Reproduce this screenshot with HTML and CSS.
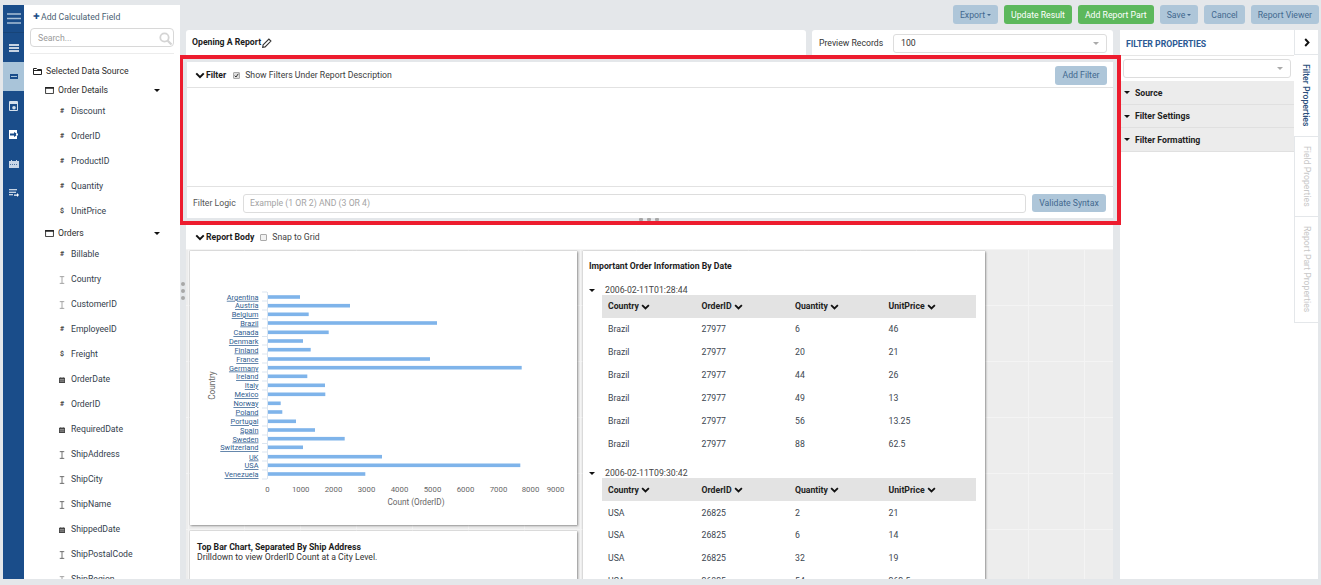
FILE: index.html
```html
<!DOCTYPE html>
<html lang="en">
<head>
<meta charset="utf-8">
<title>Report Designer</title>
<link rel="stylesheet" href="styles.css">
</head>
<body>
<svg class="defs" width="0" height="0">
  <defs>
    <symbol id="chev" viewBox="0 0 12 8"><path d="M1.5 1.5 6 6l4.5-4.5" fill="none" stroke="currentColor" stroke-width="2.4"/></symbol>
    <symbol id="ibeam" viewBox="0 0 8 10"><path d="M1 .5h6M1 9.500h6M4 .5v9" fill="none" stroke="currentColor" stroke-width="1"/></symbol>
    <symbol id="cal" viewBox="0 0 8 8"><path d="M0 1h8v7H0zM2 0h1v2H2zM5 0h1v2H5z" fill="currentColor"/><path d="M1 3.500h6M1 5.500h6" stroke="#fff" stroke-width=".6"/></symbol>
    <symbol id="win" viewBox="0 0 10 8"><path d="M.5.5h9v7h-9z" fill="none" stroke="currentColor"/><path d="M0 0h10v2H0z" fill="currentColor"/></symbol>
  </defs>
</svg>
<div class="app">
  <nav class="rail">
    <div class="rail-top"><svg width="14" height="11" viewBox="0 0 14 11"><path d="M0 1h14M0 5.500h14M0 10h14" stroke="#a9c0d6" stroke-width="1.600"/></svg></div>
    <div class="rail-item"><svg width="10" height="8" viewBox="0 0 10 8"><path d="M0 1h10M0 4h10M0 7h10" stroke="#fff" stroke-width="1.700"/></svg></div>
    <div class="rail-item rail-active"><svg width="8" height="5" viewBox="0 0 8 5"><path d="M0 0h8v5H0z" fill="#1a4d8a"/><path d="M1 2h6v1H1z" fill="#a9c4d9"/></svg></div>
    <div class="rail-item"><svg width="9" height="10" viewBox="0 0 9 10"><path d="M.5.500h8v9h-8z" fill="none" stroke="#d5e1ec"/><path d="M1 1h7v2H1z" fill="#d5e1ec"/><circle cx="5" cy="6.800" r="1.800" fill="#d5e1ec"/></svg></div>
    <div class="rail-item"><svg width="10" height="9" viewBox="0 0 10 9"><path d="M0 0h8v9H0z" fill="#fff"/><path d="M1 3.500h4V2l4 2.500L5 7V5.500H1z" fill="#1a4d8a"/><path d="M7 3.500h2v2H7z" fill="#fff"/></svg></div>
    <div class="rail-item"><svg width="10" height="8" viewBox="0 0 10 8"><path d="M0 1h10v7H0zM2 0h1v2H2zM7 0h1v2H7z" fill="#c9d6e6"/><path d="M1 4.500h8" stroke="#1a4d8a" stroke-width=".7" stroke-dasharray="1 1"/></svg></div>
    <div class="rail-item"><svg width="10" height="8" viewBox="0 0 10 8"><path d="M0 .7h8M0 3.200h7M0 5.700h4" stroke="#fff" stroke-width="1.100"/><path d="M5 5.500h3V4l2 2-2 2V6.800H5z" fill="#fff"/></svg></div>
  </nav>

  <aside class="fields">
    <div class="add-calc"><span class="plus">✚</span>Add Calculated Field</div>
    <div class="search"><span>Search...</span><svg width="13" height="13" viewBox="0 0 13 13"><circle cx="5.500" cy="5.500" r="4.200" fill="none" stroke="#d4d4d4" stroke-width="1.800"/><path d="m8.500 8.500 4 4" stroke="#d4d4d4" stroke-width="2.200"/></svg></div>
    <div class="tree">
      <div class="root"><svg class="root-ico" width="9" height="7" viewBox="0 0 9 7"><path d="M.5 6.500v-6h3l1 1h4v5z" fill="none" stroke="#222"/><path d="M0 2h9v1H0z" fill="#222"/></svg>Selected Data Source</div>
      <div class="tbl-row"><svg class="win" width="9" height="7"><use href="#win"/></svg>Order Details<i class="caret"></i></div>
      <div class="fld"><span class="t">#</span>Discount</div>
      <div class="fld"><span class="t">#</span>OrderID</div>
      <div class="fld"><span class="t">#</span>ProductID</div>
      <div class="fld"><span class="t">#</span>Quantity</div>
      <div class="fld"><span class="t">$</span>UnitPrice</div>
      <div class="tbl-row"><svg class="win" width="9" height="7"><use href="#win"/></svg>Orders<i class="caret"></i></div>
      <div class="fld"><span class="t">#</span>Billable</div>
      <div class="fld"><svg class="fi pale" width="6" height="8"><use href="#ibeam"/></svg>Country</div>
      <div class="fld"><svg class="fi pale" width="6" height="8"><use href="#ibeam"/></svg>CustomerID</div>
      <div class="fld"><span class="t">#</span>EmployeeID</div>
      <div class="fld"><span class="t">$</span>Freight</div>
      <div class="fld"><svg class="fi" width="6" height="6"><use href="#cal"/></svg>OrderDate</div>
      <div class="fld"><span class="t">#</span>OrderID</div>
      <div class="fld"><svg class="fi" width="6" height="6"><use href="#cal"/></svg>RequiredDate</div>
      <div class="fld"><svg class="fi" width="6" height="8"><use href="#ibeam"/></svg>ShipAddress</div>
      <div class="fld"><svg class="fi" width="6" height="8"><use href="#ibeam"/></svg>ShipCity</div>
      <div class="fld"><svg class="fi" width="6" height="8"><use href="#ibeam"/></svg>ShipName</div>
      <div class="fld"><svg class="fi" width="6" height="6"><use href="#cal"/></svg>ShippedDate</div>
      <div class="fld"><svg class="fi" width="6" height="8"><use href="#ibeam"/></svg>ShipPostalCode</div>
      <div class="fld"><svg class="fi pale" width="6" height="8"><use href="#ibeam"/></svg>ShipRegion</div>
    </div>
  </aside>

  <div class="split"><span class="dots"><i></i><i></i><i></i></span></div>

  <div class="work">
    <div class="toolbar">
      <button class="btn">Export<i class="mini"></i></button>
      <button class="btn green">Update Result</button>
      <button class="btn green">Add Report Part</button>
      <button class="btn">Save<i class="mini"></i></button>
      <button class="btn">Cancel</button>
      <button class="btn">Report Viewer</button>
    </div>
    <div class="columns">
      <main class="center">
        <div class="titles">
          <div class="title-card"><b>Opening A Report</b><svg width="10" height="10" viewBox="0 0 9 9"><path d="M1 6.200 6.200 1 8 2.800 2.800 8 .6 8.400z" fill="none" stroke="#333" stroke-width="1"/></svg></div>
          <div class="preview-card"><span>Preview Records</span><div class="select"><span>100</span><i class="mini gray"></i></div></div>
        </div>

        <section class="highlight">
          <div class="filter">
            <div class="filter-head">
              <svg class="chev" width="10" height="7"><use href="#chev"/></svg><b>Filter</b>
              <span class="check on"><svg width="5" height="5" viewBox="0 0 5 5"><path d="m.7 2.700 1.300 1.300L4.300.8" fill="none" stroke="#333" stroke-width="1"/></svg></span>
              <span class="show">Show Filters Under Report Description</span>
              <button class="btn add-filter">Add Filter</button>
            </div>
            <div class="filter-body"></div>
            <div class="filter-logic">
              <span class="lbl">Filter Logic</span>
              <div class="logic-input">Example (1 OR 2) AND (3 OR 4)</div>
              <button class="btn validate">Validate Syntax</button>
            </div>
          </div>
          <span class="handle"><i></i><i></i><i></i></span>
        </section>

        <div class="body-head">
          <svg class="chev" width="10" height="7"><use href="#chev"/></svg><b>Report Body</b>
          <span class="check"></span><span class="snap">Snap to Grid</span>
        </div>

        <div class="canvas">
          <div class="col-left">
            <div class="card chart">
              <svg width="387" height="274" viewBox="0 0 387 274">
                <g class="axis-line">
                  <path d="M77.500 41v187"/>
                  <path d="M72 41h5M72 50h5M72 59h5M72 68h5M72 77h5M72 85.500h5M72 94h5M72 103h5M72 112h5M72 121h5M72 130h5M72 139h5M72 148h5M72 157h5M72 166h5M72 175h5M72 184h5M72 192.500h5M72 201h5M72 210h5M72 219h5M72 228h5"/>
                </g>
                <g class="bars">
                  <rect x="78" y="44.200" width="32" height="3.600"/>
                  <rect x="78" y="52.900" width="82" height="3.600"/>
                  <rect x="78" y="61.500" width="40.700" height="3.600"/>
                  <rect x="78" y="70.200" width="169" height="3.600"/>
                  <rect x="78" y="79.500" width="60.700" height="3.600"/>
                  <rect x="78" y="88.200" width="35" height="3.600"/>
                  <rect x="78" y="96.900" width="42.700" height="3.600"/>
                  <rect x="78" y="106.200" width="162" height="3.600"/>
                  <rect x="78" y="114.900" width="253.700" height="3.600"/>
                  <rect x="78" y="123.500" width="39.300" height="3.600"/>
                  <rect x="78" y="132.500" width="57" height="3.600"/>
                  <rect x="78" y="141.500" width="57.300" height="3.600"/>
                  <rect x="78" y="150.500" width="12.700" height="3.600"/>
                  <rect x="78" y="159.200" width="14.300" height="3.600"/>
                  <rect x="78" y="168.500" width="28" height="3.600"/>
                  <rect x="78" y="177.200" width="47" height="3.600"/>
                  <rect x="78" y="185.900" width="76.700" height="3.600"/>
                  <rect x="78" y="194.500" width="35" height="3.600"/>
                  <rect x="78" y="203.900" width="114" height="3.600"/>
                  <rect x="78" y="212.500" width="252.300" height="3.600"/>
                  <rect x="78" y="221.200" width="97.300" height="3.600"/>
                </g>
                <g class="cats">
                  <text x="68.500" y="48.800">Argentina</text>
                  <text x="68.500" y="57">Austria</text>
                  <text x="68.500" y="66">Belgium</text>
                  <text x="68.500" y="74.500">Brazil</text>
                  <text x="68.500" y="84">Canada</text>
                  <text x="68.500" y="93">Denmark</text>
                  <text x="68.500" y="101.500">Finland</text>
                  <text x="68.500" y="111">France</text>
                  <text x="68.500" y="119.500">Germany</text>
                  <text x="68.500" y="128">Ireland</text>
                  <text x="68.500" y="137">Italy</text>
                  <text x="68.500" y="146">Mexico</text>
                  <text x="68.500" y="155">Norway</text>
                  <text x="68.500" y="163.500">Poland</text>
                  <text x="68.500" y="173">Portugal</text>
                  <text x="68.500" y="181.500">Spain</text>
                  <text x="68.500" y="190.500">Sweden</text>
                  <text x="68.500" y="199">Switzerland</text>
                  <text x="68.500" y="208.500">UK</text>
                  <text x="68.500" y="217">USA</text>
                  <text x="68.500" y="226">Venezuela</text>
                </g>
                <g class="ticks">
                  <text x="77.500" y="241">0</text>
                  <text x="110.700" y="241">1000</text>
                  <text x="143.500" y="241">2000</text>
                  <text x="176.500" y="241">3000</text>
                  <text x="209.500" y="241">4000</text>
                  <text x="242.500" y="241">5000</text>
                  <text x="275.500" y="241">6000</text>
                  <text x="308.500" y="241">7000</text>
                  <text x="340.500" y="241">8000</text>
                  <text x="365.500" y="241">9000</text>
                </g>
                <text class="axis-title" x="226" y="254">Count (OrderID)</text>
                <text class="axis-title" transform="translate(25 134.500) rotate(-90)">Country</text>
              </svg>
            </div>
            <div class="card note">
              <b>Top Bar Chart, Separated By Ship Address</b>
              <span>Drilldown to view OrderID Count at a City Level.</span>
            </div>
          </div>

          <div class="card report">
            <h2>Important Order Information By Date</h2>
            <div class="group-head"><i class="caret"></i>2006-02-11T01:28:44</div>
            <table>
              <thead><tr>
                <th>Country <svg width="9" height="6"><use href="#chev"/></svg></th>
                <th>OrderID <svg width="9" height="6"><use href="#chev"/></svg></th>
                <th>Quantity <svg width="9" height="6"><use href="#chev"/></svg></th>
                <th>UnitPrice <svg width="9" height="6"><use href="#chev"/></svg></th>
              </tr></thead>
              <tbody>
                <tr><td>Brazil</td><td>27977</td><td>6</td><td>46</td></tr>
                <tr><td>Brazil</td><td>27977</td><td>20</td><td>21</td></tr>
                <tr><td>Brazil</td><td>27977</td><td>44</td><td>26</td></tr>
                <tr><td>Brazil</td><td>27977</td><td>49</td><td>13</td></tr>
                <tr><td>Brazil</td><td>27977</td><td>56</td><td>13.25</td></tr>
                <tr><td>Brazil</td><td>27977</td><td>88</td><td>62.5</td></tr>
              </tbody>
            </table>
            <div class="group-head second"><i class="caret"></i>2006-02-11T09:30:42</div>
            <table>
              <thead><tr>
                <th>Country <svg width="9" height="6"><use href="#chev"/></svg></th>
                <th>OrderID <svg width="9" height="6"><use href="#chev"/></svg></th>
                <th>Quantity <svg width="9" height="6"><use href="#chev"/></svg></th>
                <th>UnitPrice <svg width="9" height="6"><use href="#chev"/></svg></th>
              </tr></thead>
              <tbody>
                <tr><td>USA</td><td>26825</td><td>2</td><td>21</td></tr>
                <tr><td>USA</td><td>26825</td><td>6</td><td>14</td></tr>
                <tr><td>USA</td><td>26825</td><td>32</td><td>19</td></tr>
                <tr><td>USA</td><td>26825</td><td>54</td><td>262.5</td></tr>
              </tbody>
            </table>
          </div>
        </div>
      </main>

      <aside class="props">
        <div class="props-main">
          <div class="props-head">FILTER PROPERTIES</div>
          <div class="props-select"><i class="mini gray"></i></div>
          <div class="acc"><i class="caret"></i>Source</div>
          <div class="acc"><i class="caret"></i>Filter Settings</div>
          <div class="acc"><i class="caret"></i>Filter Formatting</div>
        </div>
        <div class="tabs">
          <div class="tab-arrow"><svg width="6" height="9" viewBox="0 0 6 9"><path d="m1.200 1 3.300 3.500L1.200 8" fill="none" stroke="#111" stroke-width="1.900"/></svg></div>
          <div class="tab active t1"><span>Filter Properties</span></div>
          <div class="tab t2"><span>Field Properties</span></div>
          <div class="tab t3"><span>Report Part Properties</span></div>
        </div>
      </aside>
    </div>
  </div>
</div>
</body>
</html>
```
FILE: styles.css
```css
* { box-sizing: border-box; }
html, body { margin: 0; height: 100%; overflow: hidden; }
body {
  background: #e4e7ea;
  color: #333;
  font: 8.700px/1.2 Roboto, "Liberation Sans", sans-serif;
}
.defs { position: absolute; }
b { font-weight: 700; color: #1c1c1c; }
i { display: block; font-style: normal; }

.app { display: flex; width: 1321px; height: 585px; padding: 5px 2px 6px 3px; }

/* rail */
.rail { width: 21px; flex: none; background: #1a4d8a; display: flex; flex-direction: column; }
.rail-top { height: 28px; display: flex; align-items: center; justify-content: center; border-bottom: 1px solid #174478; }
.rail-item { height: 29px; display: flex; align-items: center; justify-content: center; }
.rail-active { background: #a9c4d9; }

/* left panel */
.fields { width: 156px; flex: none; background: #fff; overflow: hidden; padding: 0 6px; }
.add-calc { height: 23px; display: flex; align-items: center; padding: 1px 0 0 3px; color: #4b5f73; }
.plus { color: #1a4d8a; font-size: 8px; margin-right: 1px; }
.search { height: 19px; border: 1px solid #d8d8d8; border-radius: 4px; display: flex; align-items: center; justify-content: space-between; padding: 1px 1px 0 7px; color: #9a9a9a; }
.tree { margin-top: 6px; border-top: 1px solid #ececec; padding-top: 8px; height: 530px; }
.root { height: 19px; display: flex; align-items: center; padding-left: 3px; color: #2d2d2d; }
.root-ico { margin-right: 4px; }
.tbl-row { height: 18px; display: flex; align-items: center; padding-left: 15px; color: #2d2d2d; }
.win { margin-right: 4px; color: #222; }
.tbl-row .caret { margin-left: auto; margin-right: 14px; }
.fld { height: 25px; display: flex; align-items: center; padding-left: 29px; color: #34404c; }
.t { width: 12px; font-size: 7px; font-weight: 700; color: #444; text-align: left; padding-left: 1px; }
.fi { margin-right: 6px; color: #444; }
.fi.pale { color: #8a8a8a; }
.caret { display: block; width: 0; height: 0; border-left: 3px solid transparent; border-right: 3px solid transparent; border-top: 3px solid #111; }

.split { width: 6px; flex: none; position: relative; }
.dots { position: absolute; left: 1px; top: 277px; display: flex; flex-direction: column; gap: 3px; }
.dots i { width: 4px; height: 4px; border-radius: 50%; background: #a8a8a8; }

/* work area */
.work { flex: 1; min-width: 0; display: flex; flex-direction: column; }
.toolbar { height: 25px; display: flex; justify-content: flex-end; gap: 6px; padding-bottom: 6px; }
.btn { border: 0; border-radius: 3px; background: #aec6d9; color: #43698f; font: 8.700px/1 Roboto, "Liberation Sans", sans-serif; padding: 1px 7px 0; height: 19px; display: flex; align-items: center; justify-content: center; }
.green { background: #5cb85c; color: #fff; }
.mini { width: 0; height: 0; margin-left: 2px; border-left: 2px solid transparent; border-right: 2px solid transparent; border-top: 2px solid #43698f; }
.mini.gray { border-left-width: 3px; border-right-width: 3px; border-top: 3px solid #aaa; }

.columns { flex: 1; min-height: 0; display: flex; }
.center { width: 927px; flex: none; display: flex; flex-direction: column; min-height: 0; }

.titles { height: 25px; flex: none; display: flex; gap: 6px; }
.title-card { width: 620px; background: #fff; border-radius: 3px 3px 0 0; display: flex; align-items: center; gap: 1px; padding: 0 0 0 6px; }
.preview-card { flex: 1; background: #fff; border-radius: 3px 3px 0 0; display: flex; align-items: center; padding: 1px 6px 0 7px; }
.select { margin-left: auto; width: 214px; height: 19px; border: 1px solid #ddd; border-radius: 3px; display: flex; align-items: center; justify-content: space-between; padding: 0 7px; }

.highlight { position: relative; z-index: 1; flex: none; height: 170px; margin: 0 -8px 0 -6px; border: solid #ed1c2e; border-width: 4px 4px 4px 3px; padding: 3px 4px 3px 4px; background: #e4e7ea; }
.filter { height: 100%; background: #fff; display: flex; flex-direction: column; }
.filter-head { height: 26px; flex: none; display: flex; align-items: center; padding: 1px 0 0 8px; border-bottom: 1px solid #e2e2e2; }
.chev { color: #111; margin-right: 1px; }
.check { width: 7px; height: 7px; margin-left: 7px; border: 1px solid #aaa; border-radius: 1px; background: #eee; display: flex; align-items: center; justify-content: center; }
.check.on { background: #ddd; }
.show { margin-left: 5px; color: #3c3c3c; }
.add-filter { margin-left: auto; margin-right: 6px; width: 52px; padding: 1px 0 0; }
.filter-body { flex: 1; }
.filter-logic { height: 32px; flex: none; display: flex; align-items: center; border-top: 1px solid #e2e2e2; padding: 1px 7px 0 6px; }
.lbl { width: 50px; flex: none; color: #555; }
.logic-input { width: 783px; flex: none; height: 19px; border: 1px solid #ddd; border-radius: 3px; padding-left: 6px; color: #a4a4a4; display: flex; align-items: center; }
.validate { margin-left: 6px; width: 74px; flex: none; padding: 1px 0 0; height: 18px; }
.handle { position: absolute; left: 456px; bottom: 0; display: flex; gap: 4px; }
.handle i { width: 4px; height: 3px; background: #a8a8a8; border-radius: 1px; }

.body-head { height: 24px; flex: none; background: #fff; display: flex; align-items: center; padding-left: 9px; }
.body-head .check { margin-left: 6px; background: #f2f2f2; }
.snap { margin-left: 5px; color: #444; }

.canvas {
  flex: 1; min-height: 0; overflow: hidden; display: flex; gap: 6px; padding: 2px 4px 0;
  background-color: #ededed;
  background-image: linear-gradient(#f4f4f4 1px, transparent 1px), linear-gradient(90deg, #f4f4f4 1px, transparent 1px);
  background-size: 56px 56px;
  background-position: 2px 0;
}
.col-left { width: 387px; flex: none; display: flex; flex-direction: column; gap: 6px; }
.card { background: #fff; box-shadow: 1px 1px 2px rgba(0, 0, 0, .35), 0 0 1px rgba(0, 0, 0, .3); }
.chart { height: 274px; flex: none; }
.chart svg { display: block; }
.bars rect { fill: #7fb4ea; }
.axis-line path { stroke: #dbe5f0; stroke-width: 1; fill: none; }
.cats text { font-size: 7.400px; text-anchor: end; fill: #2f5d8f; text-decoration: underline; }
.ticks text { font-size: 7.800px; text-anchor: middle; fill: #666; }
.axis-title { font-size: 8.200px; text-anchor: middle; fill: #666; }
.note { flex: 1; padding: 11px 7px; display: flex; flex-direction: column; line-height: 10px; color: #333; }

.report { width: 402px; flex: none; padding: 0 9px 0 6px; overflow: hidden; }
.report h2 { margin: 0; height: 30px; font-size: 8.700px; font-weight: 700; color: #1c1c1c; display: flex; align-items: center; }
.group-head { height: 8px; display: flex; align-items: center; color: #444; line-height: 8px; margin-top: 5px; }
.group-head .caret { margin-right: 10px; width: 0; }
.group-head.second { margin-top: 14px; }
table { width: 374px; margin-left: 13px; margin-top: 1px; border-collapse: collapse; table-layout: fixed; }
th { height: 23px; background: #e3e3e3; text-align: left; padding: 0 0 0 6px; font-size: 8.700px; color: #222; font-weight: 700; }
th svg { color: #111; vertical-align: -0.500px; }
td { height: 22.900px; padding: 0 0 0 6px; font-size: 8.700px; color: #3c4650; }

/* right panel */
.props { width: 198px; flex: none; margin-left: 7px; display: flex; background: #fff; }
.props-main { width: 174px; flex: none; }
.props-head { height: 26px; padding: 3px 0 0 6px; display: flex; align-items: center; font-weight: 700; color: #2c5a94; border-bottom: 1px solid #e6e6e6; }
.props-select { height: 19px; margin: 3px; border: 1px solid #ddd; border-radius: 3px; display: flex; align-items: center; justify-content: flex-end; padding-right: 7px; }
.acc { height: 23.500px; background: #ececec; border-bottom: 1px solid #e0e0e0; display: flex; align-items: center; padding: 1px 0 0 4px; font-weight: 700; color: #222; }
.acc .caret { margin-right: 5px; }
.tabs { width: 24px; flex: none; }
.tab-arrow { height: 25px; display: flex; align-items: center; justify-content: center; border-left: 1px solid #e4e7ea; border-bottom: 1px solid #e4e7ea; }
.tab { display: flex; justify-content: center; padding-top: 9px; border-left: 1px solid #e4e7ea; border-bottom: 1px solid #e4e7ea; color: #c8c8c8; }
.tab span { writing-mode: vertical-rl; }
.tab.active { border-left: 0; color: #2c4f7c; font-weight: 500; }
.t1 { height: 82px; }
.t2 { height: 80px; }
.t3 { height: 106px; }
```
